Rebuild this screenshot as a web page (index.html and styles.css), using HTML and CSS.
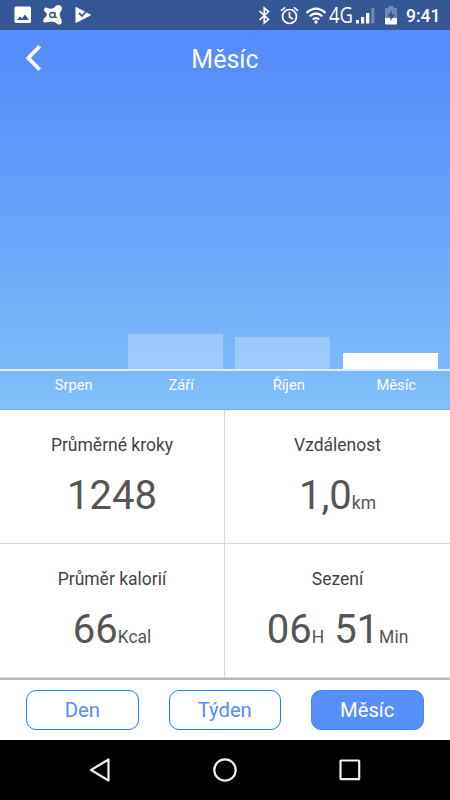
FILE: index.html
```html
<!DOCTYPE html>
<html lang="cs">
<head>
<meta charset="utf-8">
<title>Měsíc</title>
<link rel="stylesheet" href="styles.css">
</head>
<body>
<div class="status">
  <svg class="ic-photo" width="18" height="18" viewBox="0 0 18 18"><path fill="#fff" fill-rule="evenodd" d="M2 .5h13.500a1.500 1.500 0 0 1 1.500 1.500v13.500a1.500 1.500 0 0 1-1.500 1.500H2A1.500 1.500 0 0 1 .5 15.500V2A1.500 1.500 0 0 1 2 .5zM3 14h12l-4-5.500-3 4-2-2.300z"/></svg>
  <svg class="ic-avast" width="22" height="22" viewBox="0 0 22 22"><path fill="#fff" stroke="#fff" stroke-width="2" stroke-linejoin="round" d="M3.500 4.500Q9 7 13 4.200Q15.500 1 18 2.500Q20 4.500 17.500 7.500Q15.500 11 18.500 16Q19.500 20 16.500 19.500Q12 15.500 7 17L2.500 17.500Q1.500 15.500 4.500 13.500Q8 10 3 6.500z"/><circle cx="10.300" cy="11" r="2.500" fill="none" stroke="#355796" stroke-width="1.400"/><path fill="none" stroke="#355796" stroke-width="1.300" d="M13 8v5.300h2"/></svg>
  <svg class="ic-play" width="18" height="18" viewBox="0 0 18 18"><path fill="#fff" stroke="#fff" stroke-linejoin="round" d="M1 1.500L15.500 9 1 16.500z"/><path fill="none" stroke="#355796" stroke-width="1.800" d="M4 7l3 3L13 3.500"/></svg>
  <svg class="ic-bt" width="13" height="19" viewBox="0 0 13 19"><path fill="none" stroke="#fff" stroke-width="1.700" d="M1.500 5l9 8.500L6.300 17V2l4.200 3.500-9 8.500"/></svg>
  <svg class="ic-alarm" width="19" height="19" viewBox="0 0 19 19"><g fill="none" stroke="#fff" stroke-width="1.700"><circle cx="9.500" cy="10.500" r="7"/><path d="M9.500 6v5l3.500 2M1 4.800l4.200-3.500M18 4.800l-4.200-3.500"/></g></svg>
  <svg class="ic-wifi" width="22" height="17" viewBox="0 0 22 17"><g fill="none" stroke="#fff" stroke-width="2.200"><path d="M1.500 6q9.500-8.600 19 0M4.700 9.300q6.300-5.600 12.600 0M7.800 12.500q3.200-2.700 6.400 0"/></g><circle cx="11" cy="15" r="1.700" fill="#fff"/></svg>
  <span class="net">4G</span>
  <svg class="ic-signal" width="19" height="17" viewBox="0 0 19 17"><path fill="#fff" d="M0 13h3v3.500H0zM5 10h3.200v6.500H5zM10 6h3.300v10.500H10z"/><path fill="#7189b5" d="M15.300 1h3.200v15.500h-3.200z"/></svg>
  <svg class="ic-batt" width="12" height="19" viewBox="0 0 12 19"><path fill="#7189b5" d="M3.500 0h5v2H11a1 1 0 0 1 1 1v9H0V3a1 1 0 0 1 1-1h2.500z"/><path fill="#fff" d="M0 12h12v5.500a1 1 0 0 1-1 1H1a1 1 0 0 1-1-1z"/><path fill="#355796" d="M7 4l-4.500 6.500h3V15L10 8.500H7z"/></svg>
  <span class="clock">9:41</span>
</div>
<section class="hero">
  <header class="title-bar">
    <svg class="back" width="17" height="28" viewBox="0 0 17 28"><path fill="none" stroke="#fff" stroke-width="3.800" d="M14.700 2.200L3.300 14l11.400 11.800"/></svg>
    <h1>Měsíc</h1>
  </header>
  <div class="chart">
    <i class="bar bar-aug"></i><i class="bar bar-sep"></i><i class="bar bar-oct"></i><i class="bar bar-now"></i>
  </div>
  <div class="labels"><span>Srpen</span><span>Září</span><span>Říjen</span><span>Měsíc</span></div>
</section>
<main class="stats">
  <div class="stat"><h2>Průměrné kroky</h2><p><b>1248</b></p></div>
  <div class="stat"><h2>Vzdálenost</h2><p><b>1,0</b>km</p></div>
  <div class="stat"><h2>Průměr kalorií</h2><p><b>66</b>Kcal</p></div>
  <div class="stat"><h2>Sezení</h2><p><b>06</b>H<b class="minutes">51</b>Min</p></div>
</main>
<div class="tabs">
  <button>Den</button><button>Týden</button><button class="active">Měsíc</button>
</div>
<nav class="system-nav">
  <svg width="26" height="26" viewBox="0 0 26 26"><path d="M21.500 2.500v21L4 13z"/></svg>
  <svg width="26" height="26" viewBox="0 0 26 26"><circle cx="13" cy="13" r="10.700"/></svg>
  <svg width="26" height="26" viewBox="0 0 26 26"><rect x="3.500" y="3.500" width="18.700" height="18.700" rx=".5"/></svg>
</nav>
</body>
</html>
```
FILE: styles.css
```css
* { box-sizing: border-box; margin: 0; padding: 0; }
body { width: 450px; height: 800px; display: flex; flex-direction: column; overflow: hidden; background: #fff; font-family: Roboto, "Liberation Sans", sans-serif; }
svg { display: block; flex: none; }

.status { height: 30px; flex: none; display: flex; align-items: center; padding-left: 14px; background: #355796; color: #fff; }
.ic-avast { margin-left: 10px; }
.ic-play { margin-left: 11px; }
.ic-bt { margin-left: 165px; }
.ic-alarm { margin-left: 9px; }
.ic-wifi { margin-left: 6px; }
.net { width: 30px; margin-left: 2px; font-family: "Open Sans", sans-serif; font-size: 22px; line-height: 28px; height: 30px; transform: scaleX(.84); transform-origin: left; }
.ic-signal { margin-left: -3px; }
.ic-batt { margin-left: 10px; }
.clock { margin-left: 9px; font-size: 17.500px; font-weight: 500; line-height: 28px; padding-top: 2px; }

.hero { height: 380px; flex: none; display: flex; flex-direction: column; color: #fff; background: linear-gradient(#548dfa 0, #568ffa 12%, #80c0fa 100%); border-bottom: 1px solid #74b2ee; }
.title-bar { height: 58px; display: grid; grid-template-columns: 60px 1fr 60px; align-items: center; }
.back { margin-left: 25px; margin-bottom: 2px; }
h1 { padding-top: 1px; font-size: 25px; font-weight: 400; line-height: 30px; text-align: center; }
.chart { height: 283px; display: flex; align-items: flex-end; gap: 12.500px; padding-left: 20px; border-bottom: 2px solid #e0efff; }
.bar { width: 95px; background: rgba(255, 255, 255, .25); }
.bar-aug { height: 0; }
.bar-sep { height: 35px; }
.bar-oct { height: 32px; }
.bar-now { height: 16px; background: #fff; }
.labels { display: grid; grid-template-columns: repeat(4, 107.500px); padding: 5px 0 0 20px; font-size: 14.700px; line-height: 18px; text-align: center; }

.stats { height: 270px; flex: none; display: grid; grid-template-columns: 225px 225px; grid-template-rows: 134px 134px; border-bottom: 2px solid #b8b8b8; }
.stat { border-bottom: 1px solid #d8d8d8; text-align: center; color: #555; padding-top: 23px; }
.stat:nth-child(odd) { border-right: 1px solid #d8d8d8; }
.stat h2 { font-size: 17.500px; font-weight: 400; line-height: 24px; color: #444; }
.stat p { margin-top: 11px; font-size: 17.500px; line-height: 56px; }
.stat b { font-size: 40px; font-weight: 400; color: #555; }
.stat .minutes { margin-left: 10px; }

.tabs { height: 60px; flex: none; display: flex; gap: 30px; padding: 10px 0 0 26px; }
.tabs button { width: 112.500px; height: 40px; border: 1px solid #1983f5; border-radius: 10px; background: #fff; color: #548dfa; font: 400 20.200px/38px Roboto, sans-serif; }
.tabs .active { background: #568ffa; border-color: #4489f8; color: #fff; }

.system-nav { height: 60px; flex: none; display: flex; align-items: center; justify-content: center; gap: 99px; background: #000; }
.system-nav svg { fill: none; stroke: #eee; stroke-width: 2.200; stroke-linejoin: round; }
```
